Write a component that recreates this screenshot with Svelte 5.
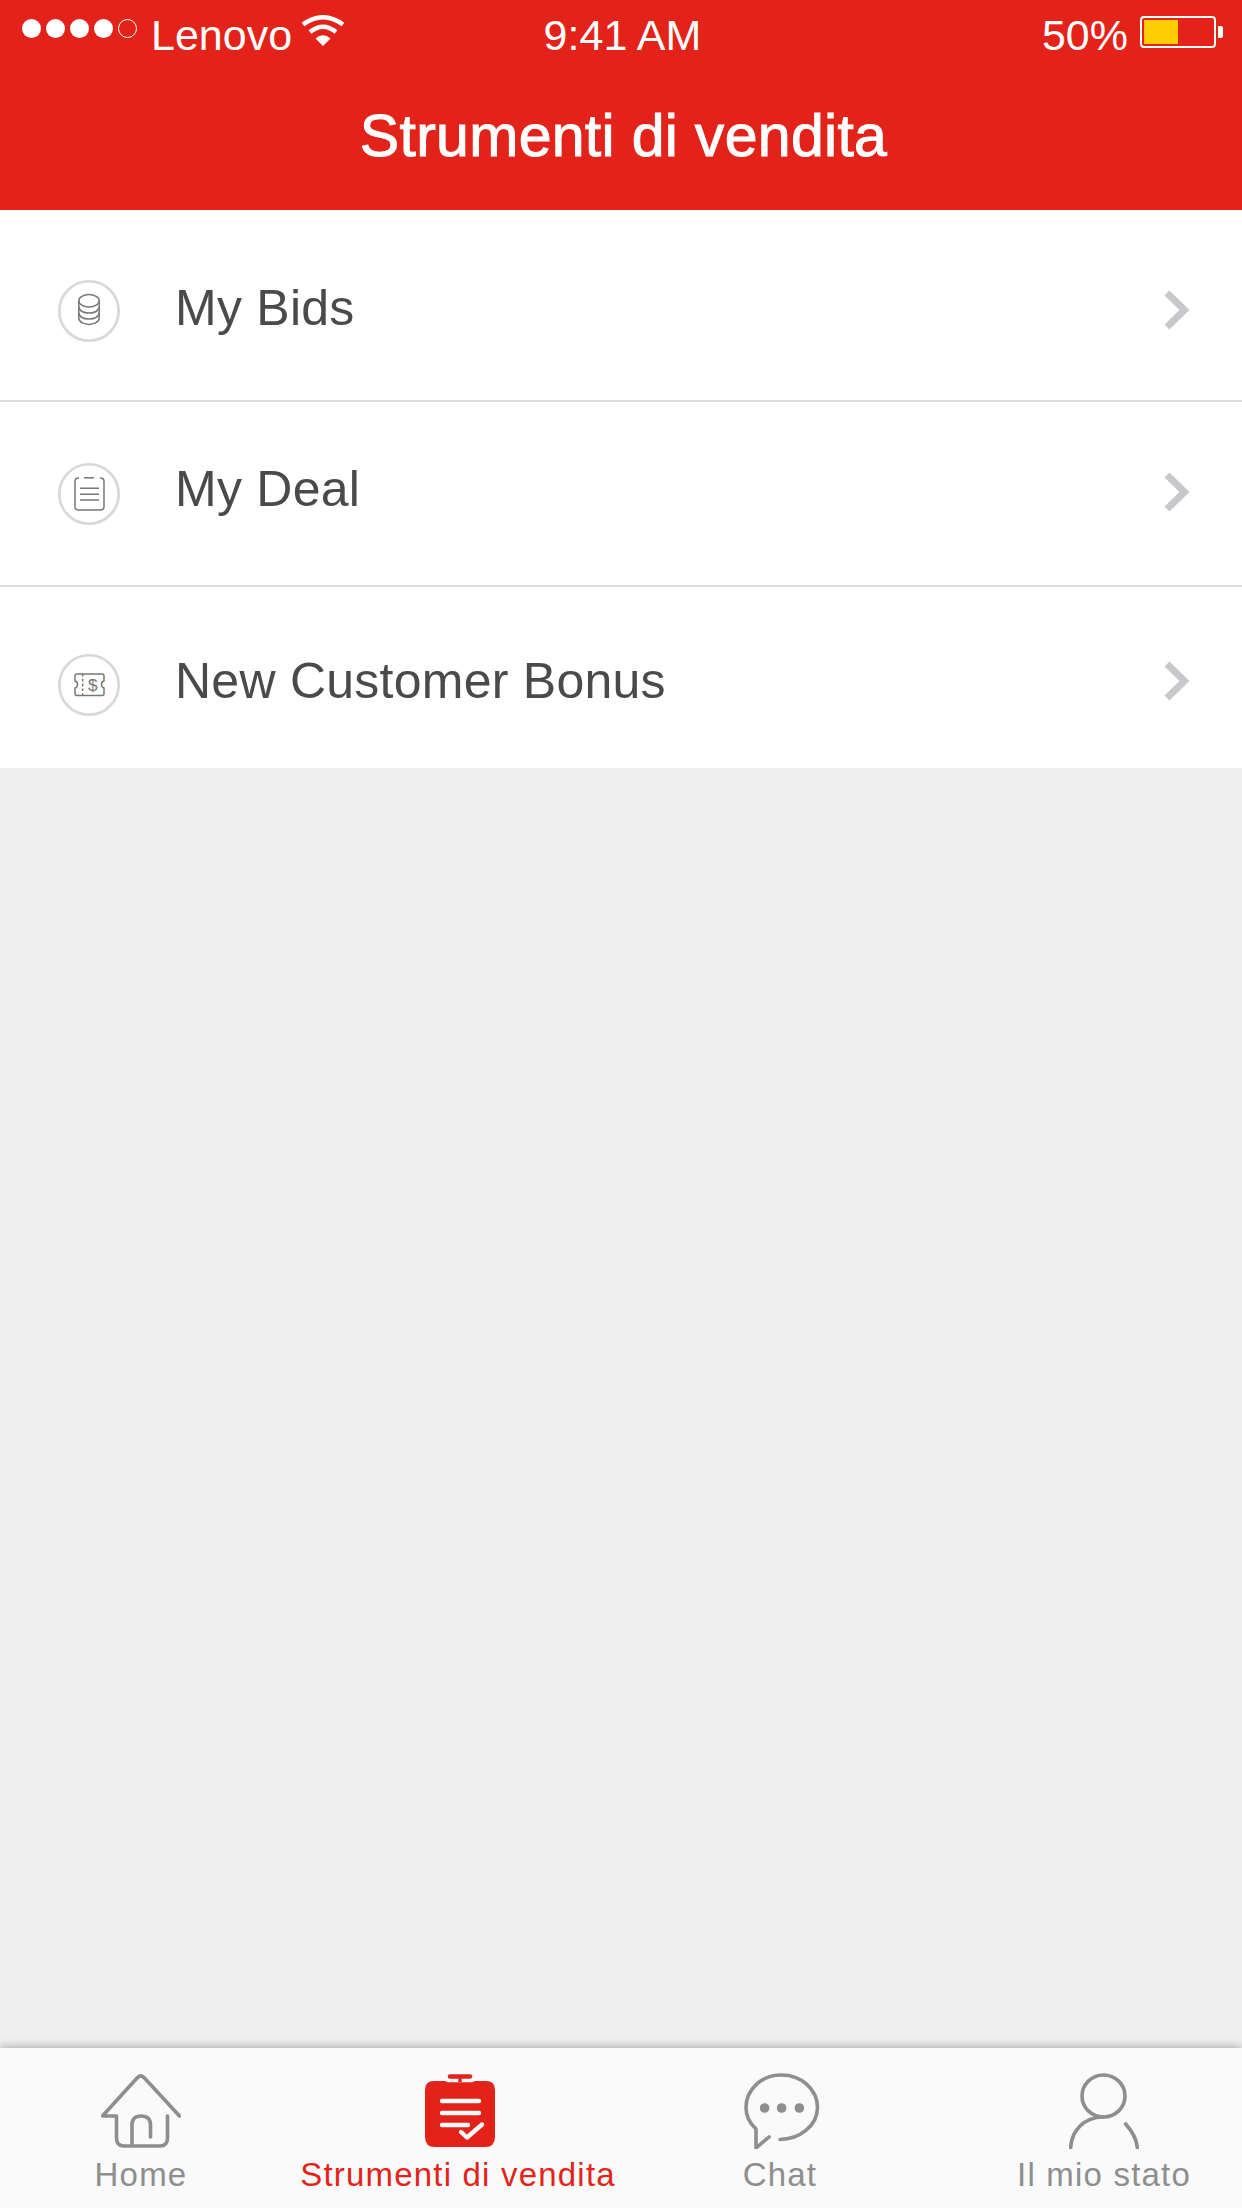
<script>
  const rows = [
    { label: 'My Bids', icon: 'coins' },
    { label: 'My Deal', icon: 'note' },
    { label: 'New Customer Bonus', icon: 'ticket' }
  ];
</script>

<div class="page">
  <header class="header">
    <div class="status">
      <div class="carrier">
        <div class="dots">
          <span class="dot"></span>
          <span class="dot"></span>
          <span class="dot"></span>
          <span class="dot"></span>
          <span class="dot empty"></span>
        </div>
        <span class="carrier-name">Lenovo</span>
        <svg class="wifi" width="44" height="32" viewBox="0 0 44 32">
          <path d="M22 31 L14.5 23.5 Q22 17 29.5 23.5 Z" fill="#fff" />
          <path d="M9 17 Q22 6.5 35 17" fill="none" stroke="#fff" stroke-width="4.5" />
          <path d="M2 9.5 Q22 -5 42 9.5" fill="none" stroke="#fff" stroke-width="4.5" />
        </svg>
      </div>
      <span class="time">9:41 AM</span>
      <div class="power">
        <span class="percent">50%</span>
        <div class="battery"><div class="charge"></div></div>
        <div class="nub"></div>
      </div>
    </div>
    <h1 class="title">Strumenti di vendita</h1>
  </header>

  <ul class="list">
    {#each rows as row}
      <li class="row">
        <svg class="row-icon" width="62" height="62" viewBox="0 0 62 62" fill="none" stroke="#777" stroke-width="1.5">
          <circle cx="31" cy="31" r="29.7" stroke="#d8d8d8" stroke-width="2.6" />
          {#if row.icon === 'coins'}
            <ellipse cx="31" cy="20.7" rx="10.2" ry="6.2" />
            <path d="M20.8 21 V38 C20.8 42 26 44.4 31 44.4 C36 44.4 41.2 42 41.2 38 V21" />
            <path d="M20.8 27 C21.5 31 26 33 31 33 C36 33 40.5 31 41.2 27" />
            <path d="M20.8 33 C21.5 37 26 39 31 39 C36 39 40.5 37 41.2 33" />
          {:else if row.icon === 'note'}
            <path d="M21 15 H20.5 Q17 15 17 18.5 V43.5 Q17 47 20.5 47 H42.5 Q46 47 46 43.5 V18.5 Q46 15 42.5 15 H42" />
            <path d="M26 14.8 H36" />
            <path d="M22 25.3 H41 M22 31.3 H41 M22 37 H41" />
          {:else}
            <path d="M19 20 H44 Q46 20 46 22 V27 Q43.5 27.5 43.5 30.5 Q43.5 33.5 46 34 V39.5 Q46 41.5 44 41.5 H19 Q17 41.5 17 39.5 V34 Q19.5 33.5 19.5 30.5 Q19.5 27.5 17 27 V22 Q17 20 19 20 Z" />
            <path d="M24.7 20 V41.5" stroke-dasharray="2.6 2.2" />
            <text class="dollar" x="34.7" y="37" text-anchor="middle">$</text>
          {/if}
        </svg>
        <span class="row-label">{row.label}</span>
        <svg class="chevron" width="27" height="42" viewBox="0 0 27 42" fill="none">
          <path d="M4 4 L21.5 21 L4 38" stroke="#c7c7cc" stroke-width="7" />
        </svg>
      </li>
    {/each}
  </ul>

  <div class="spacer"></div>

  <nav class="tabs">
    <div class="tab">
      <div class="icon">
        <svg width="80" height="74" viewBox="0 0 80 74" fill="none" stroke="#8e8e8e" stroke-width="3.6" stroke-linecap="round" stroke-linejoin="round">
          <path d="M78.5 42 L43 3.5 Q39.6 0.5 36.5 3.5 L1.5 42 H15.5 V64 Q15.5 72 23 72 H59 Q66.5 72 66.5 64 V42" />
          <path d="M31 71 V51 Q31 42 40 42 Q49.5 42 49.5 51 V63" />
        </svg>
      </div>
      <span>Home</span>
    </div>
    <div class="tab active">
      <div class="icon shift">
        <svg width="70" height="74" viewBox="0 0 70 74">
          <path d="M35 3 V8" stroke="#e3231a" stroke-width="3.4" />
          <path d="M25 2.5 H45" stroke="#e3231a" stroke-width="4.4" stroke-linecap="round" />
          <path d="M9 7 H20 Q22 8.2 24 8.2 H46 Q48 8.2 50 7 H61 Q70 7 70 16 V63 Q70 73 60 73 H10 Q0 73 0 63 V16 Q0 7 9 7 Z" fill="#e3231a" />
          <g fill="none" stroke="#fafafa" stroke-width="4.4" stroke-linecap="round" stroke-linejoin="round">
            <path d="M17 27 H54 M17 39 H54 M17 51 H43" />
            <path d="M36 58 L42 63.5 L57 50.5" />
          </g>
        </svg>
      </div>
      <span>Strumenti di vendita</span>
    </div>
    <div class="tab">
      <div class="icon shift">
        <svg width="76" height="76" viewBox="0 0 76 76" fill="none" stroke="#8e8e8e" stroke-width="3.6" stroke-linecap="round" stroke-linejoin="round">
          <path d="M36 66.5 C55 66.5 73.5 53 73.5 34.5 C73.5 16 57 2 37.5 2 C18 2 2 16 2 34.5 C2 43 6 50.5 12 56 V75 L25 64" />
          <circle cx="20.6" cy="35" r="4.8" fill="#8e8e8e" stroke="none" />
          <circle cx="37.6" cy="35" r="4.8" fill="#8e8e8e" stroke="none" />
          <circle cx="55.4" cy="35" r="4.8" fill="#8e8e8e" stroke="none" />
        </svg>
      </div>
      <span>Chat</span>
    </div>
    <div class="tab last">
      <div class="icon">
        <svg width="70" height="76" viewBox="0 0 70 76" fill="none" stroke="#8e8e8e" stroke-width="3.6" stroke-linecap="round">
          <ellipse cx="34.5" cy="23" rx="21.5" ry="21" />
          <path d="M1.7 74.5 C2.5 58 15 44 34 44" />
          <path d="M56.6 51 C63 58 67.5 65 68.3 74.5" />
        </svg>
      </div>
      <span>Il mio stato</span>
    </div>
  </nav>
</div>

<style>
  :global(body) {
    margin: 0;
    font-family: "Liberation Sans", Arial, sans-serif;
  }

  .page {
    width: 1242px;
    height: 2208px;
    display: flex;
    flex-direction: column;
    background: #efefef;
  }

  .header {
    height: 210px;
    background: #e3231a;
    color: #fff;
    display: flex;
    flex-direction: column;
  }

  .status {
    height: 66px;
    display: grid;
    grid-template-columns: 1fr auto 1fr;
    align-items: center;
    padding: 0 19px 0 22px;
    font-size: 43px;
  }

  .carrier {
    display: flex;
    align-items: center;
  }

  .carrier-name,
  .time,
  .percent {
    margin-top: 4px;
  }

  .dots {
    display: flex;
    gap: 5px;
    margin-bottom: 9px;
  }

  .dot {
    width: 19px;
    height: 19px;
    border-radius: 50%;
    background: #fff;
    box-sizing: border-box;
  }

  .dot.empty {
    background: none;
    border: 1.5px solid #fff;
  }

  .carrier-name {
    margin-left: 14px;
  }

  .wifi {
    margin-left: 9px;
    margin-top: -4px;
  }

  .power {
    display: flex;
    align-items: center;
    justify-content: flex-end;
  }

  .battery {
    width: 76px;
    height: 32px;
    box-sizing: border-box;
    margin-left: 12px;
    margin-top: -2px;
    border: 2px solid #fff;
    border-radius: 4px;
    padding: 2px;
  }

  .charge {
    width: 34px;
    height: 100%;
    background: #ffcc00;
  }

  .nub {
    width: 5px;
    height: 12px;
    margin-left: 2px;
    margin-top: -2px;
    background: #fff;
    border-radius: 0 2px 2px 0;
  }

  .title {
    flex: 1;
    margin: 0 0 4px;
    padding-left: 5px;
    display: flex;
    align-items: center;
    justify-content: center;
    font-size: 59px;
    font-weight: 400;
    letter-spacing: 0.3px;
    -webkit-text-stroke: 1px #fff;
  }

  .list {
    list-style: none;
    margin: 0;
    padding: 0;
    background: #fff;
  }

  .row {
    display: flex;
    align-items: center;
    box-sizing: border-box;
    height: 185px;
    padding: 0 52px 0 58px;
    border-bottom: 2px solid #dcdcdc;
  }

  .row-icon {
    flex: none;
  }

  .row-label {
    flex: 1;
    margin-left: 55px;
    font-size: 50px;
    letter-spacing: 0.25px;
    color: #4a4a4a;
  }

  .row:nth-child(1) {
    height: 192px;
    padding-top: 6px;
  }

  .row:nth-child(1) .row-icon {
    margin-top: 6px;
  }

  .row:nth-child(1) .chevron {
    margin-top: 4px;
  }

  .row:nth-child(2) .row-label {
    margin-bottom: 10px;
  }

  .row:nth-child(2) .chevron {
    margin-bottom: 4px;
  }

  .row:nth-child(3) {
    height: 181px;
    padding-top: 7px;
    border-bottom: 0;
  }

  .row:nth-child(3) .row-icon {
    margin-top: 8px;
  }

  .dollar {
    font-family: "Liberation Sans", Arial, sans-serif;
    font-size: 17px;
    fill: #777;
    stroke: none;
  }

  .spacer {
    flex: 1;
  }

  .tabs {
    height: 160px;
    background: #fafafa;
    box-shadow: 0 -2px 8px rgba(0, 0, 0, 0.25);
    display: grid;
    grid-template-columns: 282px 352px 292px 316px;
  }

  .tab {
    display: flex;
    flex-direction: column;
    align-items: center;
    padding-top: 25px;
    color: #8e8e8e;
    font-size: 33px;
    letter-spacing: 1.2px;
  }

  .icon {
    height: 76px;
    display: flex;
    align-items: center;
  }

  .icon.shift {
    margin-left: 3px;
  }

  .tab span {
    margin-top: 7px;
    white-space: nowrap;
  }

  .tab.active {
    color: #e3231a;
  }

  .tab.last {
    padding-left: 40px;
  }
</style>
